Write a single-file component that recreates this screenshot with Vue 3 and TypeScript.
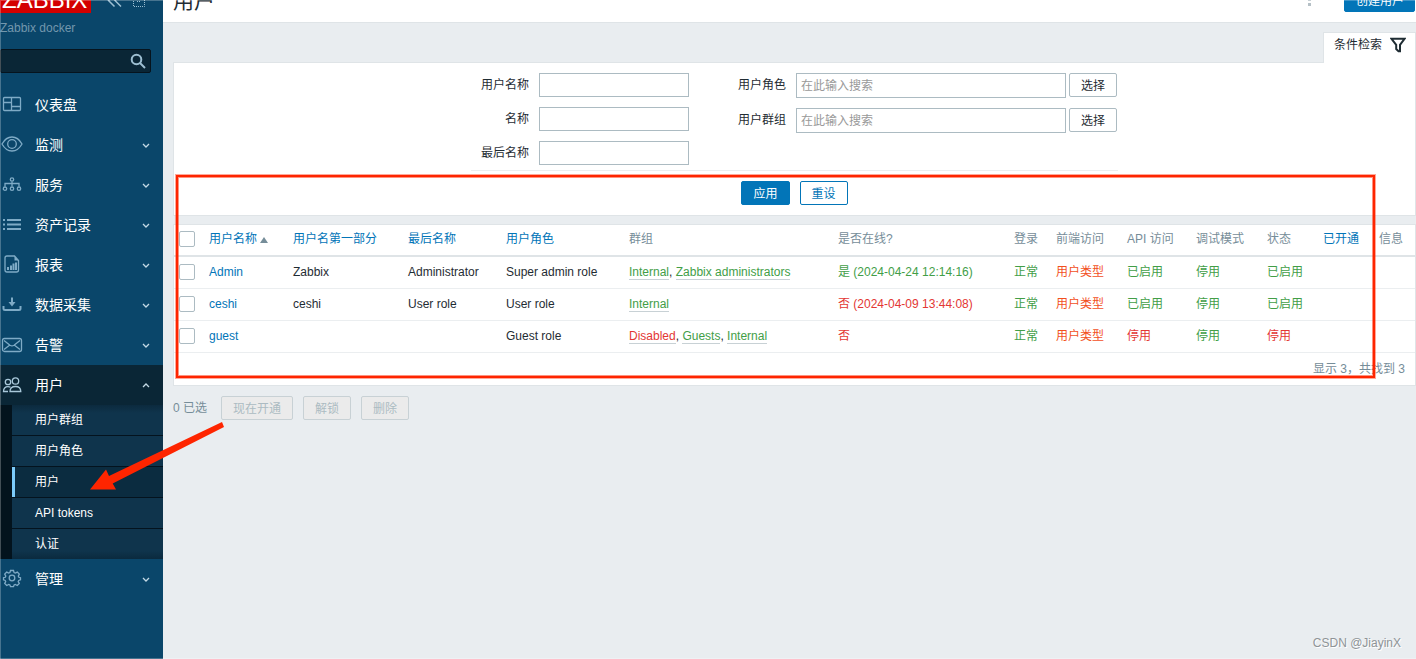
<script setup lang="ts">
import { ref } from 'vue'

interface MenuItem {
  id: string
  label: string
  children?: string[]
}

interface Group {
  name: string
  disabled?: boolean
}

interface Cell {
  text: string
  tone: 'green' | 'red' | 'orange'
}

interface User {
  alias: string
  name: string
  surname: string
  role: string
  groups: Group[]
  cells: Cell[]
}

const menu: MenuItem[] = [
  { id: 'dashboard', label: '仪表盘' },
  { id: 'monitoring', label: '监测', children: [] },
  { id: 'services', label: '服务', children: [] },
  { id: 'inventory', label: '资产记录', children: [] },
  { id: 'reports', label: '报表', children: [] },
  { id: 'collection', label: '数据采集', children: [] },
  { id: 'alerts', label: '告警', children: [] },
  { id: 'users', label: '用户', children: ['用户群组', '用户角色', '用户', 'API tokens', '认证'] },
  { id: 'admin', label: '管理', children: [] },
]

const openMenu = ref('users')
const currentPage = ref('用户')

const textFields = [
  { id: 'filter-username', label: '用户名称' },
  { id: 'filter-name', label: '名称' },
  { id: 'filter-surname', label: '最后名称' },
]

const pickFields = [
  { id: 'filter-roles', label: '用户角色' },
  { id: 'filter-groups', label: '用户群组' },
]

const columns = [
  { id: 'alias', label: '用户名称', sortable: true },
  { id: 'name', label: '用户名第一部分', sortable: true },
  { id: 'surname', label: '最后名称', sortable: true },
  { id: 'role', label: '用户角色', sortable: true },
  { id: 'groups', label: '群组' },
  { id: 'online', label: '是否在线?' },
  { id: 'login', label: '登录' },
  { id: 'frontend', label: '前端访问' },
  { id: 'api', label: 'API 访问' },
  { id: 'debug', label: '调试模式' },
  { id: 'status', label: '状态' },
  { id: 'provisioned', label: '已开通', sortable: true },
  { id: 'info', label: '信息' },
]

const users: User[] = [
  {
    alias: 'Admin',
    name: 'Zabbix',
    surname: 'Administrator',
    role: 'Super admin role',
    groups: [{ name: 'Internal' }, { name: 'Zabbix administrators' }],
    cells: [
      { text: '是 (2024-04-24 12:14:16)', tone: 'green' },
      { text: '正常', tone: 'green' },
      { text: '用户类型', tone: 'orange' },
      { text: '已启用', tone: 'green' },
      { text: '停用', tone: 'green' },
      { text: '已启用', tone: 'green' },
    ],
  },
  {
    alias: 'ceshi',
    name: 'ceshi',
    surname: 'User role',
    role: 'User role',
    groups: [{ name: 'Internal' }],
    cells: [
      { text: '否 (2024-04-09 13:44:08)', tone: 'red' },
      { text: '正常', tone: 'green' },
      { text: '用户类型', tone: 'orange' },
      { text: '已启用', tone: 'green' },
      { text: '停用', tone: 'green' },
      { text: '已启用', tone: 'green' },
    ],
  },
  {
    alias: 'guest',
    name: '',
    surname: '',
    role: 'Guest role',
    groups: [{ name: 'Disabled', disabled: true }, { name: 'Guests' }, { name: 'Internal' }],
    cells: [
      { text: '否', tone: 'red' },
      { text: '正常', tone: 'green' },
      { text: '用户类型', tone: 'orange' },
      { text: '停用', tone: 'red' },
      { text: '停用', tone: 'green' },
      { text: '停用', tone: 'red' },
    ],
  },
]

const bulkActions = ['现在开通', '解锁', '删除']

function toggle(item: MenuItem) {
  openMenu.value = openMenu.value === item.id ? '' : item.id
}
</script>

<template>
  <div class="app">
    <aside class="sidebar">
      <div class="brand">
        <a class="logo" href="#">ZABBIX</a>
        <button class="brand-btn collapse" type="button" aria-label="Collapse">
          <svg width="16" height="16" viewBox="0 0 16 16"><path d="M7.500 2 1.500 8.500l6 6M14 2 8 8.500l6 6" /></svg>
        </button>
        <button class="brand-btn" type="button" aria-label="Hide sidebar">
          <svg width="14" height="16" viewBox="0 0 14 16">
            <path d="M1.500 3v11.500h11V3M5 9.500h4" stroke-dasharray="1 1" />
          </svg>
        </button>
      </div>
      <div class="server">Zabbix docker</div>
      <form class="search" role="search" @submit.prevent>
        <input type="text" aria-label="Search" />
        <button type="submit" aria-label="Search">
          <svg width="16" height="16" viewBox="0 0 16 16"><circle cx="6.500" cy="6.500" r="4.800" /><path d="m10 10 5 5" /></svg>
        </button>
      </form>

      <nav>
        <ul class="menu">
          <li v-for="item in menu" :key="item.id" :class="{ open: openMenu === item.id }">
            <component
              :is="item.children ? 'button' : 'a'"
              :href="item.children ? undefined : '#'"
              :type="item.children ? 'button' : undefined"
              class="menu-row"
              @click="toggle(item)"
            >
              <svg class="menu-icon" width="24" height="24" viewBox="0 0 24 24" aria-hidden="true">
                <g v-if="item.id === 'dashboard'">
                  <rect x="3.500" y="4.500" width="17" height="13" rx="1" />
                  <path d="M11.500 4.500v13M3.500 9.500h8M11.500 13.500h9" />
                </g>
                <g v-else-if="item.id === 'monitoring'">
                  <path d="M2 11C4.500 6.500 7.800 4 12 4s7.500 2.500 10 7c-2.500 4.500-5.800 7-10 7S4.500 15.500 2 11Z" />
                  <circle cx="12" cy="11" r="4.300" />
                </g>
                <g v-else-if="item.id === 'services'">
                  <circle cx="12" cy="6.500" r="1.700" />
                  <path d="M12 8.500v5M5 13.500v-3h14v3" />
                  <circle cx="5" cy="15.700" r="1.700" />
                  <circle cx="12" cy="15.700" r="1.700" />
                  <circle cx="19" cy="15.700" r="1.700" />
                </g>
                <g v-else-if="item.id === 'inventory'" class="thick">
                  <path d="M7 7h14M7 11.500h14M7 16h14M3 7h2M3 11.500h2M3 16h2" />
                </g>
                <g v-else-if="item.id === 'reports'">
                  <path d="M7 3h7.500l4 4.500V17a2 2 0 0 1-2 2H7a2 2 0 0 1-2-2V5a2 2 0 0 1 2-2Z" />
                  <path class="solid" d="M14.500 3v4.500h4Z" />
                  <path class="thick" d="M8 14v3M11 12.500V17M13.500 10.500V17M16 9.500V17" />
                </g>
                <g v-else-if="item.id === 'collection'">
                  <path class="thick" d="M3.500 13v2.500a1.500 1.500 0 0 0 1.500 1.500h14a1.500 1.500 0 0 0 1.500-1.500V13M12 4.500V11" />
                  <path class="solid" d="M8.500 9h7L12 13.500Z" />
                </g>
                <g v-else-if="item.id === 'alerts'">
                  <rect x="2.500" y="5.500" width="19" height="13" rx="2" />
                  <path d="m4 7.500 6 4.700q2 1.400 4 0l6-4.700M4 16.500l5.500-4.200M20 16.500l-5.500-4.200" />
                </g>
                <g v-else-if="item.id === 'users'">
                  <circle cx="15.500" cy="8" r="3.200" />
                  <path d="M10 18.500c0-3.300 2-5 5.500-5s5.300 1.700 5.300 5Z" />
                  <circle cx="8" cy="9" r="2.700" />
                  <path d="M8 18.500H3.500c0-3 1.500-4.800 4.500-4.800 1 0 1.800.200 2.500.600" />
                </g>
                <g v-else>
                  <circle cx="12" cy="11" r="2.800" />
                  <path d="M10.500 3.500h3l.600 2.100 1.200.500 2-1 2 2-1 2 .500 1.200 1.700.400v2.100l-1.800.600-.500 1.200 1.100 1.900-2 2-2-1-1.200.500-.600 1.700h-3l-.600-1.700-1.200-.500-2 1-2-2 1-1.900-.500-1.200-1.700-.600v-2.100l1.800-.400.500-1.200-1.100-2 2-2 2 1 1.200-.500Z" />
                </g>
              </svg>
              <span class="menu-label">{{ item.label }}</span>
              <svg v-if="item.children" class="chevron" width="8" height="8" viewBox="0 0 8 8" aria-hidden="true">
                <path :d="openMenu === item.id ? 'm1 6 3-3 3 3' : 'm1 3 3 3 3-3'" />
              </svg>
            </component>
            <ul v-if="openMenu === item.id && item.children?.length" class="submenu">
              <li v-for="child in item.children" :key="child">
                <a href="#" :class="{ current: child === currentPage }" @click.prevent="currentPage = child">{{ child }}</a>
              </li>
            </ul>
          </li>
        </ul>
      </nav>
    </aside>

    <div class="page">
      <header class="page-header">
        <h1>用户</h1>
        <button class="kebab" type="button" aria-label="More">
          <svg width="4" height="16" viewBox="0 0 4 16"><path d="M0 1h3v3H0zM0 7h3v3H0zM0 12h3v3H0z" /></svg>
        </button>
        <button class="btn primary create" type="button">创建用户</button>
      </header>

      <main>
        <div class="tabs">
          <button class="filter-tab" type="button">
            条件检索
            <svg width="16" height="16" viewBox="0 0 16 16" aria-hidden="true">
              <path d="M1.500 1.800h13L10 7.800v6.400H8.500L6.200 12V7.800Z" />
            </svg>
          </button>
        </div>

        <form class="panel filter" @submit.prevent>
          <div class="filter-fields">
            <div class="field-column">
              <div v-for="field in textFields" :key="field.id" class="field">
                <label :for="field.id">{{ field.label }}</label>
                <input :id="field.id" class="text-box" type="text" />
              </div>
            </div>
            <div class="field-column">
              <div v-for="field in pickFields" :key="field.id" class="field">
                <label :for="field.id">{{ field.label }}</label>
                <div class="picker">
                  <input :id="field.id" class="text-box wide" type="text" placeholder="在此输入搜索" />
                  <button class="btn plain" type="button">选择</button>
                </div>
              </div>
            </div>
          </div>
          <div class="filter-actions">
            <button class="btn primary" type="submit">应用</button>
            <button class="btn outline" type="reset">重设</button>
          </div>
        </form>

        <div class="panel">
          <table class="users">
            <colgroup>
              <col class="c-check" />
              <col v-for="column in columns" :key="column.id" :class="'c-' + column.id" />
            </colgroup>
            <thead>
              <tr>
                <th><input type="checkbox" aria-label="全选" /></th>
                <th v-for="column in columns" :key="column.id" scope="col">
                  <a v-if="column.sortable" href="#">{{ column.label }}<i v-if="column.id === 'alias'" class="sort-up"></i></a>
                  <template v-else>{{ column.label }}</template>
                </th>
              </tr>
            </thead>
            <tbody>
              <tr v-for="user in users" :key="user.alias">
                <td><input type="checkbox" :aria-label="user.alias" /></td>
                <td><a href="#">{{ user.alias }}</a></td>
                <td>{{ user.name }}</td>
                <td>{{ user.surname }}</td>
                <td>{{ user.role }}</td>
                <td>
                  <template v-for="(group, index) in user.groups" :key="group.name"><template v-if="index">, </template><a href="#" class="group" :class="group.disabled ? 'red' : 'green'">{{ group.name }}</a></template>
                </td>
                <td v-for="(cell, index) in user.cells" :key="index" :class="cell.tone">{{ cell.text }}</td>
                <td></td>
                <td></td>
              </tr>
            </tbody>
          </table>
          <div class="table-stats">显示 3，共找到 3</div>
        </div>

        <div class="bulk">
          <span>0 已选</span>
          <button v-for="action in bulkActions" :key="action" class="btn" type="button" disabled>{{ action }}</button>
        </div>
      </main>
    </div>

    <div class="highlight"></div>
    <svg class="arrow" width="140" height="74" viewBox="0 0 140 74" aria-hidden="true">
      <path d="M132 2 19 56 16 49.500 0 69.500h26l-3.300-6L134 7Z" />
    </svg>
    <div class="watermark">CSDN @JiayinX</div>
    <div class="frame"></div>
  </div>
</template>

<style>
body {
  margin: 0;
  background: #e9edf0;
}
</style>

<style scoped>
.app {
  position: relative;
  display: flex;
  min-height: 100vh;
  overflow: hidden;
  background: #e9edf0;
  color: #1f2c33;
  font: 12px/18px "Liberation Sans", "Noto Sans CJK SC", sans-serif;
}
* {
  box-sizing: border-box;
}
button,
input {
  margin: 0;
  padding: 0;
  font: inherit;
  color: inherit;
}
button {
  border: 0;
  background: none;
}
a {
  color: #0275b8;
  text-decoration: none;
}
ul {
  margin: 0;
  padding: 0;
  list-style: none;
}
svg {
  display: block;
  fill: none;
  stroke: currentColor;
}

.sidebar {
  flex: 0 0 163px;
  min-width: 0;
  background: #0a466a;
  color: #fff;
}
.brand {
  display: flex;
  align-items: flex-end;
  height: 13px;
  overflow: hidden;
}
.logo {
  flex: 0 0 91px;
  padding-left: 2px;
  background: #d40000;
  color: #fff;
  font-size: 24px;
  line-height: 26px;
}
.brand-btn {
  padding-bottom: 5px;
  color: #9dbfd2;
}
.collapse {
  margin: 0 9px 0 16px;
}
.collapse svg {
  stroke-width: 1.5;
}
.server {
  margin-top: 6px;
  color: #7397ad;
}
.search {
  display: flex;
  align-items: center;
  height: 24px;
  margin: 12px 12px 12px 0;
  padding-right: 4px;
  border: 1px solid #06141e;
  border-radius: 2px;
  background: #0a2636;
}
.search input {
  flex: 1;
  width: 100%;
  min-width: 0;
  border: 0;
  outline: 0;
  background: none;
}
.search button {
  color: #9dbfd2;
}
.search svg {
  stroke-width: 2;
}
.menu-row {
  display: flex;
  align-items: center;
  width: 100%;
  height: 40px;
  padding-right: 13px;
  color: #fff;
  font-size: 14px;
  line-height: 20px;
  text-align: left;
}
.menu-icon {
  margin-right: 11px;
  color: #7fabc6;
  stroke-width: 1.3;
}
.thick {
  stroke-width: 2;
}
.solid {
  fill: currentColor;
  stroke: none;
}
.menu-label {
  flex: 1;
}
.chevron {
  color: #c3d9e5;
  stroke-width: 1.3;
}
.open .menu-row {
  background: #0a2636;
}
.open .menu-icon {
  color: #a9c8da;
}
.submenu {
  padding-left: 12px;
  background: #03131d;
}
.submenu li + li {
  border-top: 1px solid #04131e;
}
.submenu a {
  display: block;
  padding: 6px 20px;
  border-left: 3px solid transparent;
  background: #0f344c;
  color: #fff;
}
.submenu a.current {
  border-left-color: #7ccbfa;
  background: #0b2c40;
}
.submenu li:first-child a {
  background: linear-gradient(#0b2a3e, #0f344c 8px);
}
.submenu li:last-child a {
  background: linear-gradient(#0f344c 22px, #0b2a3e);
}

.page {
  flex: 1;
  min-width: 0;
}
.page-header {
  display: flex;
  align-items: flex-end;
  height: 23px;
  padding: 0 1px 10px 10px;
  overflow: hidden;
  border-bottom: 1px solid #dfe4e7;
  background: #fff;
}
h1 {
  flex: 1;
  margin: 0;
  font-size: 21px;
  font-weight: 400;
  line-height: 22px;
}
.kebab {
  margin: 0 32px 5px 0;
}
.kebab svg {
  fill: #b5c0c6;
  stroke: none;
}
main {
  padding: 9px 0 20px 10px;
}
.btn {
  height: 24px;
  padding: 1px 11px 0;
  border: 1px solid #acbbc2;
  border-radius: 2px;
  line-height: 20px;
  white-space: nowrap;
}
.btn.primary {
  border-color: #0275b8;
  background: #0275b8;
  color: #fff;
}
.btn.outline {
  border-color: #0275b8;
  background: #fff;
  color: #0275b8;
}
.btn.plain {
  background: #fff;
}
.btn:disabled {
  border-color: #c8d1d5;
  background: #ebebeb;
  color: #acbbc2;
}
.btn.create {
  width: 71px;
}
.tabs {
  display: flex;
  justify-content: flex-end;
}
.filter-tab {
  position: relative;
  display: flex;
  align-items: center;
  gap: 8px;
  height: 31px;
  margin-bottom: -1px;
  padding: 0 9px 6px 10px;
  border: 1px solid #dfe4e7;
  border-bottom: 0;
  background: #fff;
}
.filter-tab svg {
  stroke-width: 2;
}
.panel {
  margin-bottom: 8px;
  border: 1px solid #dfe4e7;
  background: #fff;
}
.filter {
  display: flex;
  flex-direction: column;
  align-items: center;
  padding: 10px 0;
}
.filter-fields {
  display: flex;
  gap: 49px;
  padding: 0 1px 5px 0;
  border-bottom: 1px solid #ebeef0;
}
.field-column {
  display: flex;
  flex-direction: column;
  gap: 10px;
}
.field {
  display: flex;
  align-items: flex-start;
  justify-content: flex-end;
  gap: 10px;
}
.field label {
  padding: 3px 0 3px 10px;
}
.field-column + .field-column label {
  padding-left: 0;
}
.picker {
  display: flex;
  gap: 3px;
}
.text-box {
  width: 150px;
  height: 24px;
  padding: 0 4px;
  border: 1px solid #acbbc2;
  border-radius: 0;
  background: #fff;
}
.text-box.wide {
  width: 270px;
  height: 25px;
}
.text-box::placeholder {
  color: #999;
  opacity: 1;
}
.filter-actions {
  display: flex;
  gap: 10px;
  padding-top: 10px;
}

.users {
  width: 100%;
  table-layout: fixed;
  border-collapse: separate;
  border-spacing: 0;
}
.users th,
.users td {
  height: 32px;
  padding: 0 5px 2px;
  border-bottom: 1px solid #ebeef0;
  text-align: left;
  font-weight: 400;
  line-height: 18px;
  white-space: nowrap;
}
.users th {
  border-bottom: 2px solid #dfe4e7;
  color: #768d99;
}
.c-check { width: 30px; }
.c-alias { width: 84px; }
.c-name { width: 115px; }
.c-surname { width: 98px; }
.c-role { width: 123px; }
.c-groups { width: 209px; }
.c-online { width: 176px; }
.c-login { width: 42px; }
.c-frontend { width: 71px; }
.c-api { width: 69px; }
.c-debug { width: 71px; }
.c-status { width: 56px; }
.c-provisioned { width: 56px; }
.c-info { width: 41px; }
.users input {
  display: block;
  width: 16px;
  height: 16px;
  appearance: none;
  border: 1px solid #acbbc2;
  border-radius: 2px;
  background: #fff;
}
.users input:checked {
  background: #0275b8;
}
.sort-up {
  display: inline-block;
  margin-left: 3px;
  border: 4px solid transparent;
  border-top: 0;
  border-bottom: 6px solid #768d99;
}
.users .green {
  color: #429e47;
}
.users .red {
  color: #e33734;
}
.users .orange {
  color: #f24f1d;
}
.group {
  border-bottom: 1px solid #c8d1d5;
}
.table-stats {
  padding: 7px 10px;
  color: #768d99;
  text-align: right;
}
.bulk {
  display: flex;
  align-items: center;
  gap: 10px;
  padding-top: 2px;
  color: #768d99;
}
.bulk span {
  margin-right: 4px;
}

.highlight {
  position: absolute;
  top: 175px;
  left: 176px;
  right: 41px;
  height: 203px;
  border: 2px solid #fe2500;
  box-shadow: 0 0 0 1px rgba(254, 37, 0, 0.4), inset 0 0 0 1px rgba(254, 37, 0, 0.5);
  pointer-events: none;
}
.arrow {
  position: absolute;
  top: 420px;
  left: 90px;
  fill: #fe2500;
  stroke: none;
  pointer-events: none;
}
.watermark {
  position: absolute;
  right: 15px;
  bottom: 7px;
  color: #8f9497;
  text-shadow: 1px 1px 0 #fff;
}
.frame {
  position: absolute;
  inset: 0;
  box-shadow: inset 1px 1px 0 rgba(255, 255, 255, 0.25), inset 0 -1px 0 rgba(255, 255, 255, 0.25);
  pointer-events: none;
}
</style>
